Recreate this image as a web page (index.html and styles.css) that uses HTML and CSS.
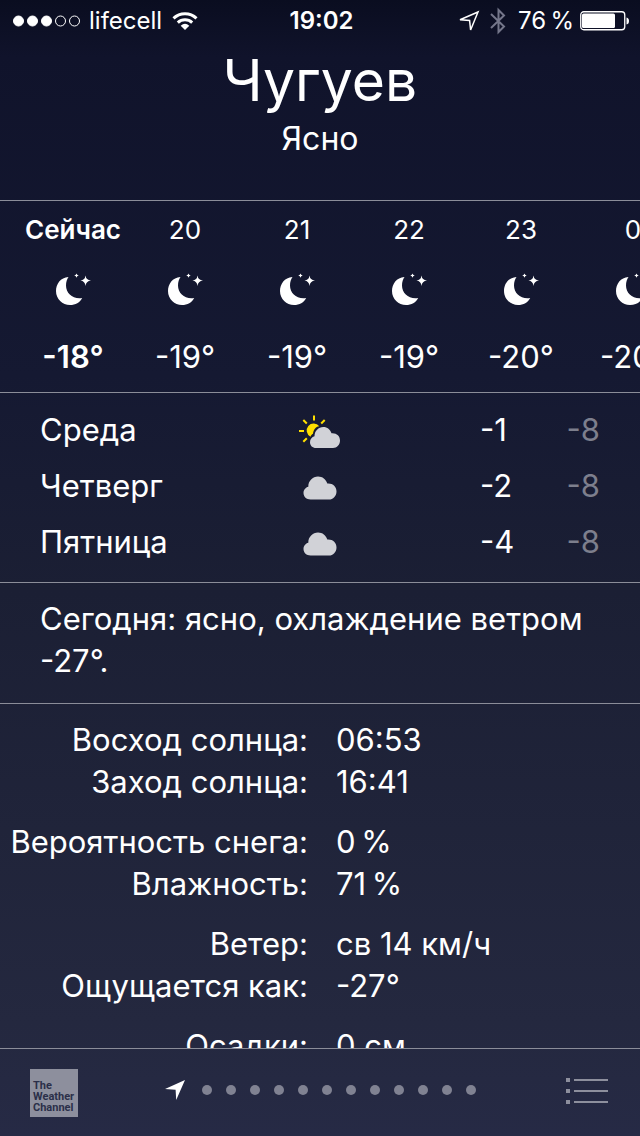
FILE: index.html
```
<!DOCTYPE html>
<html lang="ru">
<head>
    <meta charset="UTF-8">
    <meta name="viewport" content="width=device-width, initial-scale=1.0">
    <title>Погода - Чугуев</title>
    <link rel="stylesheet" href="styles.css">
</head>
<body>
    <!-- Shared icons -->
    <svg class="sprite" aria-hidden="true">
        <symbol id="moon" viewBox="0 0 36 34">
            <path d="M13.500 4C5.500 4.500 1 11 1 18C1 26 7.500 32 15 32C20.500 32 25 29.500 27.200 25C18 26.500 11 20.500 11 12.500C11 9 12 6 13.500 4Z"/>
            <path d="M30.500 2.500Q31 7 36 7.500Q31 8 30.500 13Q30 8 25.500 7.500Q30 7 30.500 2.500Z"/>
            <path d="M21.500 0.500Q21.800 2.200 23.700 2.500Q21.800 2.800 21.500 4.700Q21.200 2.800 19.300 2.500Q21.200 2.200 21.500 0.500Z"/>
        </symbol>
        <symbol id="cloud" viewBox="0 0 34 24">
            <path d="M7.500 23.500C3.500 23.500 0.500 20.700 0.500 17C0.500 13.700 2.700 11.300 5.300 10.700C5.300 4.800 9.700 0.500 15 0.500C19.500 0.500 23 3.300 24.300 7.600C29.700 7.100 33.500 10.600 33.500 15.400C33.500 20 30 23.500 26 23.500Z"/>
        </symbol>
    </svg>

    <div class="app">
        <div class="status-bar">
            <div class="status-left">
                <svg width="68" height="12" viewBox="0 0 68 12" fill="#fff" stroke="#fff">
                    <circle cx="5.500" cy="6" r="5"/>
                    <circle cx="19.500" cy="6" r="5"/>
                    <circle cx="33.500" cy="6" r="5"/>
                    <circle cx="47.500" cy="6" r="5" fill="none"/>
                    <circle cx="61.500" cy="6" r="5" fill="none"/>
                </svg>
                <span>lifecell</span>
                <svg class="wifi" width="26" height="20" viewBox="0 0 26 20" fill="none" stroke="#fff" stroke-width="3">
                    <path d="M1.500 7.300A16.500 16.500 0 0 1 24.500 7.300"/>
                    <path d="M5.800 11.600A10.500 10.500 0 0 1 20.200 11.600"/>
                    <path d="M13 19L8.700 14.700Q13 11 17.300 14.700Z" fill="#fff" stroke="none"/>
                </svg>
            </div>
            <time class="status-time">19:02</time>
            <div class="status-right">
                <svg width="22" height="22" viewBox="0 0 22 22" fill="none" stroke="#fff" stroke-width="1.500">
                    <path d="M2 9.800L20 2L12.600 20L11.600 10.400Z"/>
                </svg>
                <svg class="bluetooth" width="16" height="28" viewBox="0 0 16 28" fill="none" stroke="#74768a" stroke-width="2">
                    <path d="M1 7L14 19.500L8.500 25V3L14 8.500L1 21"/>
                </svg>
                <span>76&#8239;%</span>
                <svg width="50" height="20" viewBox="0 0 50 20">
                    <rect x="0.750" y="0.750" width="44" height="18" rx="3" fill="none" stroke="#fff" stroke-width="1.300"/>
                    <rect x="2" y="2.500" width="33" height="14.500" rx="1.500" fill="#fff"/>
                    <path d="M46.500 6.500Q49 7 49 10Q49 13 46.500 13.500Z" fill="#fff"/>
                </svg>
            </div>
        </div>

        <header class="city">
            <h1>Чугуев</h1>
            <p>Ясно</p>
        </header>

        <section class="hourly">
            <div class="hour now">
                <span class="hour-label">Сейчас</span>
                <svg class="moon"><use href="#moon"/></svg>
                <span class="hour-temp">-18°</span>
            </div>
            <div class="hour">
                <span class="hour-label">20</span>
                <svg class="moon"><use href="#moon"/></svg>
                <span class="hour-temp">-19°</span>
            </div>
            <div class="hour">
                <span class="hour-label">21</span>
                <svg class="moon"><use href="#moon"/></svg>
                <span class="hour-temp">-19°</span>
            </div>
            <div class="hour">
                <span class="hour-label">22</span>
                <svg class="moon"><use href="#moon"/></svg>
                <span class="hour-temp">-19°</span>
            </div>
            <div class="hour">
                <span class="hour-label">23</span>
                <svg class="moon"><use href="#moon"/></svg>
                <span class="hour-temp">-20°</span>
            </div>
            <div class="hour">
                <span class="hour-label">0</span>
                <svg class="moon"><use href="#moon"/></svg>
                <span class="hour-temp">-20°</span>
            </div>
        </section>

        <section class="daily">
            <table>
                <tr>
                    <th scope="row">Среда</th>
                    <td class="sky">
                        <svg class="sun-cloud" viewBox="0 0 42 34">
                            <g stroke="#ffdf00" stroke-width="2">
                                <path d="M15 0.500V5.500M4.300 5L7.800 8.500M25.700 5L22.200 8.500M0 16H5M4.300 26.700L7.800 23.200"/>
                            </g>
                            <path d="M11.500 21.700A7 7 0 1 1 20.300 11.300C16.500 11.800 14.500 15 14 18.700C12.800 19.400 12 20.500 11.500 21.700Z" fill="#ffdf00"/>
                            <path d="M17 33C13.500 33 11 30.500 11 27.200C11 24.300 12.800 22 15.500 21.300C15.500 16 19.500 12 24.300 12C28.400 12 31.300 14.500 32.500 18.300C37.500 17.800 41 21 41 25.500C41 29.700 38 33 34 33Z" fill="#d1d2d7"/>
                        </svg>
                    </td>
                    <td class="high">-1</td>
                    <td class="low">-8</td>
                </tr>
                <tr>
                    <th scope="row">Четверг</th>
                    <td class="sky"><svg class="cloud"><use href="#cloud"/></svg></td>
                    <td class="high">-2</td>
                    <td class="low">-8</td>
                </tr>
                <tr>
                    <th scope="row">Пятница</th>
                    <td class="sky"><svg class="cloud"><use href="#cloud"/></svg></td>
                    <td class="high">-4</td>
                    <td class="low">-8</td>
                </tr>
            </table>
        </section>

        <p class="summary">Сегодня: ясно, охлаждение ветром -27°.</p>

        <section class="details">
            <dl>
                <dt>Восход солнца:</dt>
                <dd>06:53</dd>
                <dt>Заход солнца:</dt>
                <dd>16:41</dd>
            </dl>
            <dl>
                <dt>Вероятность снега:</dt>
                <dd>0&#8239;%</dd>
                <dt>Влажность:</dt>
                <dd>71&#8239;%</dd>
            </dl>
            <dl>
                <dt>Ветер:</dt>
                <dd>св 14 км/ч</dd>
                <dt>Ощущается как:</dt>
                <dd>-27°</dd>
            </dl>
            <dl>
                <dt>Осадки:</dt>
                <dd>0 см</dd>
            </dl>
        </section>

        <footer>
            <a class="channel" href="#">The<br>Weather<br>Channel</a>
            <div class="pages">
                <svg class="here" width="20" height="20" viewBox="0 0 20 20" fill="#fff">
                    <path d="M0 9L20 0L11.200 20L10.600 9.700Z"/>
                </svg>
                <span class="dot"></span>
                <span class="dot"></span>
                <span class="dot"></span>
                <span class="dot"></span>
                <span class="dot"></span>
                <span class="dot"></span>
                <span class="dot"></span>
                <span class="dot"></span>
                <span class="dot"></span>
                <span class="dot"></span>
                <span class="dot"></span>
                <span class="dot"></span>
            </div>
            <button class="list-btn" type="button" aria-label="Список городов">
                <svg width="42" height="26" viewBox="0 0 42 26" fill="#8d8f9d">
                    <path d="M0 0H4V4H0ZM0 11H4V15H0ZM0 22H4V26H0ZM8 1H42V3H8ZM8 12H42V14H8ZM8 23H42V25H8Z"/>
                </svg>
            </button>
        </footer>
    </div>
</body>
</html>
```
FILE: styles.css
```
* {
    margin: 0;
    padding: 0;
    box-sizing: border-box;
}

body {
    background-color: #252943;
    color: #fff;
    font-family: Inter, "Liberation Sans", sans-serif;
    font-size: 31px;
    line-height: 42px;
}

svg {
    display: block;
    flex-shrink: 0;
}

.sprite {
    position: absolute;
    width: 0;
    height: 0;
}

.app {
    display: flex;
    flex-direction: column;
    height: 100vh;
    overflow: hidden;
    background: linear-gradient(180deg, #0a0d20 0%, #10132b 5%, #151932 33%, #1b1f34 52%, #24283f 90%, #262a45 100%);
}

/* Status bar */
.status-bar {
    display: grid;
    grid-template-columns: 1fr auto 1fr;
    align-items: center;
    height: 40px;
    padding: 2px 10px 0 13px;
    font-size: 24px;
    line-height: 38px;
}

.status-left,
.status-right {
    display: flex;
    align-items: center;
}

.status-left {
    gap: 8px;
}

.status-right {
    justify-content: flex-end;
    gap: 6px;
}

.wifi {
    margin-left: 2px;
}

.bluetooth {
    margin: 0 6px 0 4px;
}

.status-time {
    font-weight: 600;
}

/* City */
.city {
    flex-shrink: 0;
    padding: 4px 0 40px;
    font-size: 32px;
    text-align: center;
}

.city h1 {
    font-size: 57px;
    font-weight: 400;
    line-height: 74px;
}

/* Hourly forecast */
.hourly {
    display: flex;
    flex-shrink: 0;
    overflow: hidden;
    padding: 8px 0 14px 17px;
    border-top: 1px solid #8b8d99;
}

.hour {
    display: flex;
    flex: 0 0 112px;
    flex-direction: column;
    align-items: center;
}

.hour-label {
    font-size: 26px;
}

.now {
    font-weight: 600;
}

.moon {
    width: 36px;
    height: 34px;
    margin: 22px 0 29px;
    fill: #fff;
}

/* Daily forecast */
.daily {
    flex-shrink: 0;
    padding: 9px 40px 12px;
    border-top: 1px solid #8b8d99;
}

.daily table {
    width: 100%;
    table-layout: fixed;
    border-collapse: collapse;
}

.daily tr {
    height: 56px;
}

.daily th {
    width: 40%;
    font-weight: 400;
    text-align: left;
}

.sky {
    width: 20%;
    padding-top: 4px;
}

.sky svg {
    margin: 0 auto;
}

.cloud {
    width: 34px;
    height: 24px;
    fill: #d1d2d7;
}

.sun-cloud {
    width: 42px;
    height: 34px;
}

.high {
    padding-left: 104px;
}

.low {
    width: 86px;
    color: #7d7f8d;
    text-align: right;
}

/* Summary */
.summary {
    flex-shrink: 0;
    padding: 15px 40px 21px;
    border-top: 1px solid #8b8d99;
}

/* Details */
.details {
    flex: 1;
    min-height: 0;
    overflow: hidden;
    padding-top: 15px;
    border-top: 1px solid #8b8d99;
}

.details dl {
    display: grid;
    grid-template-columns: 1fr 1fr;
    column-gap: 28px;
    margin-bottom: 18px;
    padding-left: 4px;
}

.details dt {
    text-align: right;
    white-space: nowrap;
}

/* Footer */
footer {
    display: grid;
    grid-template-columns: 1fr auto 1fr;
    flex-shrink: 0;
    align-items: center;
    height: 88px;
    padding: 0 30px;
    border-top: 1px solid #8b8d99;
}

.channel {
    width: 48px;
    height: 48px;
    padding: 11px 0 0 3px;
    background-color: #8d8f9d;
    color: #2b2f49;
    font-family: Roboto, sans-serif;
    font-size: 11px;
    font-weight: 700;
    line-height: 11px;
    text-decoration: none;
}

.pages {
    display: flex;
    align-items: center;
    gap: 14px;
    padding-bottom: 6px;
}

.here {
    margin-right: 3px;
}

.dot {
    width: 10px;
    height: 10px;
    border-radius: 50%;
    background-color: #808292;
}

.list-btn {
    justify-self: end;
    padding: 0 2px 4px;
    border: none;
    background: none;
    cursor: pointer;
}
```
